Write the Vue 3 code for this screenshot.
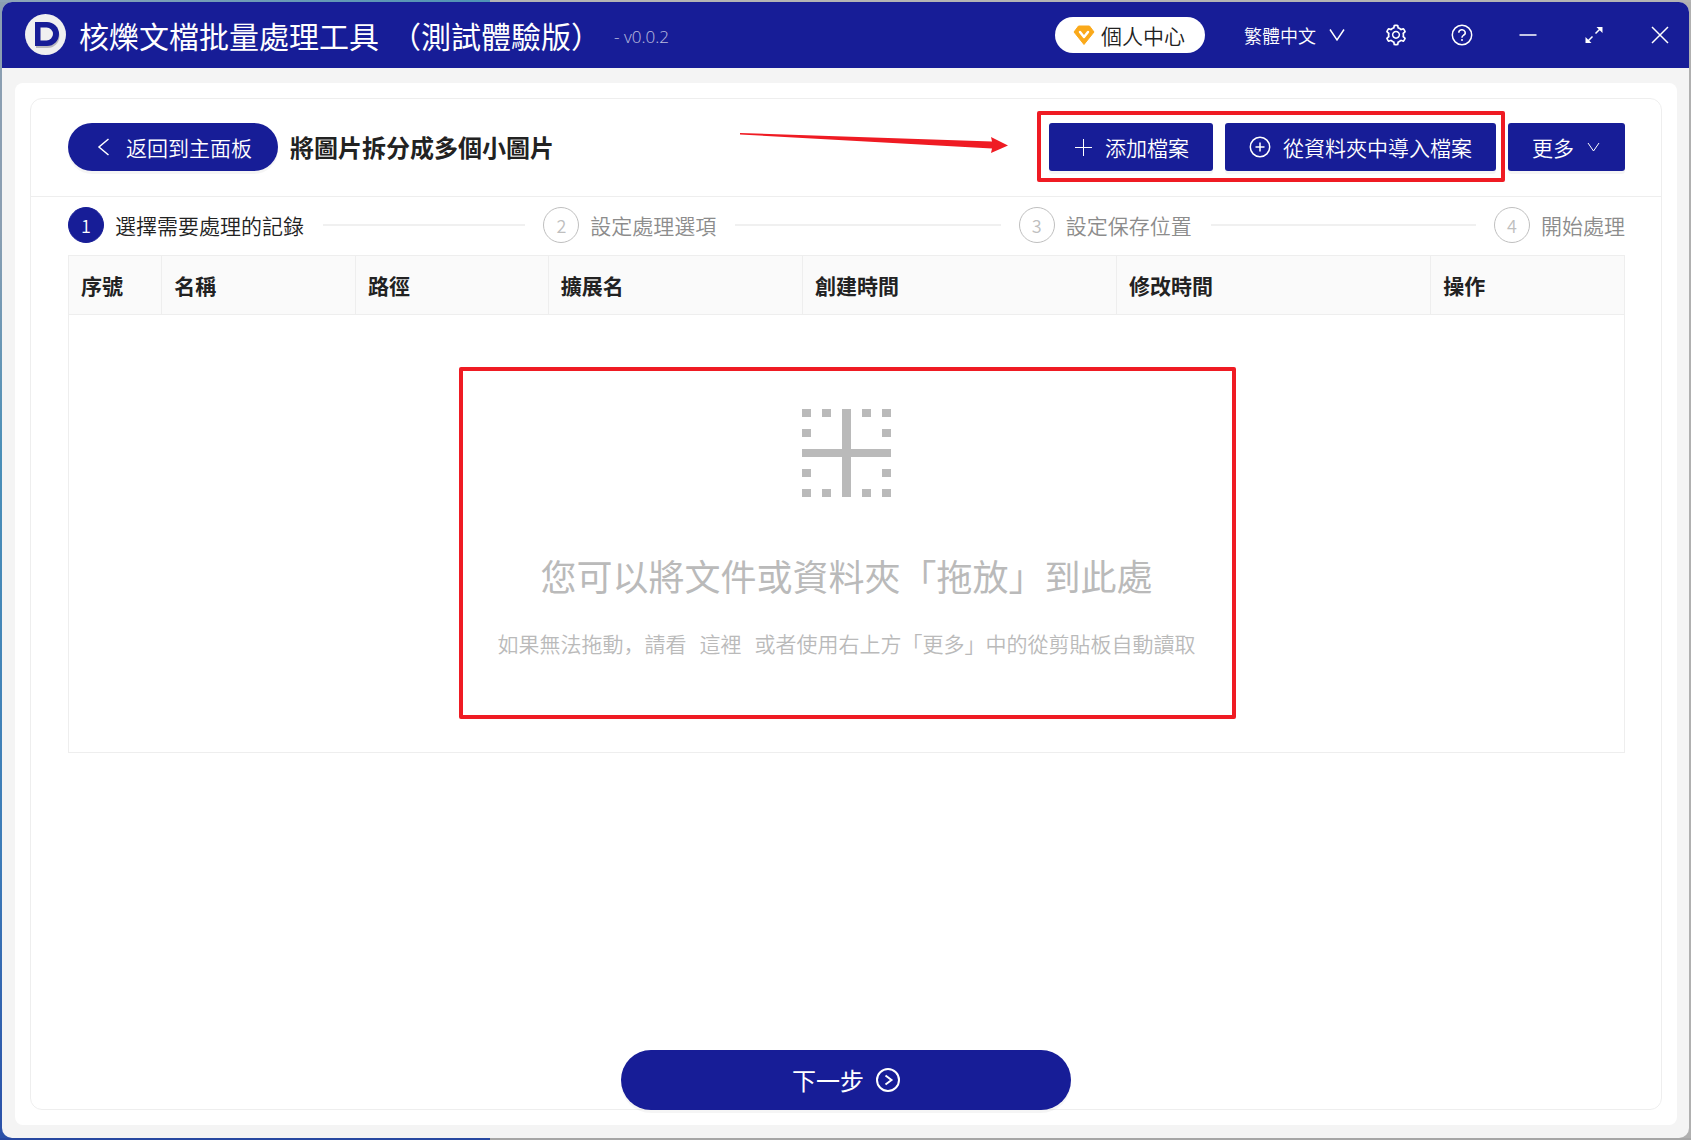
<script setup>
const steps = ['選擇需要處理的記錄', '設定處理選項', '設定保存位置', '開始處理']
const columns = [
  { label: '序號', width: 6 },
  { label: '名稱', width: 12.45 },
  { label: '路徑', width: 12.4 },
  { label: '擴展名', width: 16.35 },
  { label: '創建時間', width: 20.2 },
  { label: '修改時間', width: 20.2 },
  { label: '操作', width: 12.4 },
]
const dots = [
  [0, 0], [20, 0], [60, 0], [80, 0],
  [0, 20], [80, 20],
  [0, 60], [80, 60],
  [0, 80], [20, 80], [60, 80], [80, 80],
]
</script>

<template>
  <div class="desktop">
    <div class="window">
      <header class="titlebar">
        <svg class="logo" viewBox="0 0 41 41" aria-hidden="true">
          <circle cx="20.5" cy="20.5" r="20.5" fill="#f0f0f0" />
          <path d="M11 10h11.5a11.5 11.5 0 0 1 0 24H11z" fill="#b9b9bd" />
          <path d="M10 8h12a12 12 0 0 1 0 24H10z" fill="#171d97" />
          <path d="M15.5 13.5h6a6.500 6.500 0 0 1 0 13h-6z" fill="#f0f0f0" />
        </svg>
        <h1 class="app-name"><span>核爍文檔批量處理工具</span><span>（測試體驗版）</span></h1>
        <span class="version">- v0.0.2</span>

        <button class="account" type="button">
          <svg width="22" height="22" viewBox="0 0 22 22" aria-hidden="true">
            <path d="M5.500 2h11L21 8 11 20.500 1 8z" fill="#faa91a" stroke="#faa91a" stroke-linejoin="round" />
            <path d="M7 8l4 5 4-5" fill="none" stroke="#fff" stroke-width="2.500" stroke-linecap="round" stroke-linejoin="round" />
          </svg>
          個人中心
        </button>
        <label class="language">
          <select aria-label="繁體中文">
            <option>繁體中文</option>
          </select>
          <svg width="16" height="16" viewBox="0 0 16 16" aria-hidden="true">
            <path d="M1 2.500l7 10.500 7-10.500" class="line" />
          </svg>
        </label>
        <nav class="controls">
          <button type="button" aria-label="設定">
            <svg width="24" height="24" viewBox="0 0 1024 1024" fill="currentColor">
              <path d="M924.8 625.7l-65.5-56c3.1-19 4.7-38.4 4.7-57.8s-1.6-38.8-4.7-57.8l65.5-56a32.03 32.03 0 009.3-35.2l-.9-2.6a443.74 443.74 0 00-79.7-137.9l-1.8-2.1a32.12 32.12 0 00-35.1-9.5l-81.3 28.9c-30-24.6-63.5-44-99.7-57.6l-15.7-85a32.05 32.05 0 00-25.8-25.7l-2.7-.5c-52.1-9.4-106.9-9.4-159 0l-2.7.5a32.05 32.05 0 00-25.8 25.7l-15.8 85.4a351.86 351.86 0 00-99 57.4l-81.9-29.1a32 32 0 00-35.1 9.5l-1.8 2.1a446.02 446.02 0 00-79.7 137.9l-.9 2.6c-4.5 12.5-.8 26.5 9.3 35.2l66.3 56.6c-3.1 18.8-4.6 38-4.6 57.1 0 19.2 1.5 38.4 4.6 57.1L99 625.5a32.03 32.03 0 00-9.3 35.2l.9 2.6c18.1 50.4 44.9 96.9 79.7 137.9l1.8 2.1a32.12 32.12 0 0035.1 9.5l81.9-29.1c29.8 24.5 63.1 43.9 99 57.4l15.8 85.4a32.05 32.05 0 0025.8 25.7l2.7.5a449.4 449.4 0 00159 0l2.7-.5a32.05 32.05 0 0025.8-25.7l15.7-85a350 350 0 0099.7-57.6l81.3 28.9a32 32 0 0035.1-9.5l1.8-2.1c34.8-41.1 61.6-87.5 79.7-137.9l.9-2.6c4.5-12.3.8-26.3-9.3-35zM788.3 465.9c2.5 15.1 3.8 30.6 3.8 46.1s-1.3 31-3.8 46.1l-6.6 40.1 74.7 63.9a370.03 370.03 0 01-42.6 73.6L721 702.8l-31.4 25.8c-23.9 19.6-50.5 35-79.3 45.8l-38.1 14.3-17.9 97a377.5 377.5 0 01-85 0l-17.9-97.2-37.8-14.5c-28.5-10.8-55-26.2-78.7-45.7l-31.4-25.9-93.4 33.2c-17-22.9-31.2-47.6-42.6-73.6l75.5-64.5-6.5-40c-2.4-14.9-3.7-30.3-3.7-45.5 0-15.3 1.2-30.6 3.7-45.5l6.5-40-75.5-64.5c11.3-26.1 25.6-50.7 42.6-73.6l93.4 33.2 31.4-25.9c23.7-19.5 50.2-34.9 78.7-45.7l37.9-14.3 17.9-97.2c28.1-3.2 56.8-3.2 85 0l17.9 97 38.1 14.3c28.7 10.8 55.4 26.2 79.3 45.8l31.4 25.8 92.8-32.9c17 22.9 31.2 47.6 42.6 73.6L781.8 426l6.500 39.900zM512 326c-97.200 0-176 78.800-176 176s78.800 176 176 176 176-78.800 176-176-78.800-176-176-176zm79.200 255.200A111.600 111.600 0 01512 614c-29.900 0-58-11.700-79.200-32.800A111.600 111.600 0 01400 502c0-29.900 11.700-58 32.800-79.200C454 401.600 482.100 390 512 390c29.900 0 58 11.600 79.200 32.800A111.600 111.600 0 01624 502c0 29.900-11.700 58-32.800 79.200z" />
            </svg>
          </button>
          <button type="button" aria-label="說明">
            <svg width="24" height="24" viewBox="0 0 24 24">
              <circle cx="12" cy="12" r="9.700" class="line" />
              <path d="M8.800 9.800a3.200 2.900 0 1 1 4.600 2.500q-1.400.8-1.400 2.200v.3" class="line" />
              <circle cx="12" cy="17" r="1" fill="currentColor" />
            </svg>
          </button>
          <button type="button" aria-label="最小化">
            <svg width="24" height="24" viewBox="0 0 24 24"><path d="M3.500 12h17" class="line" /></svg>
          </button>
          <button type="button" aria-label="最大化">
            <svg width="24" height="24" viewBox="0 0 24 24">
              <path d="M5.500 18.500l5-5M13.500 10.500l5-5" class="line" />
              <path d="M14.500 4h6v6zM3.500 14v6h6z" fill="currentColor" />
            </svg>
          </button>
          <button type="button" aria-label="關閉">
            <svg width="24" height="24" viewBox="0 0 24 24"><path d="M4 4l16 16M20 4L4 20" class="line" /></svg>
          </button>
        </nav>
      </header>

      <main class="body">
        <div class="card">
          <section class="panel">
            <div class="toolbar">
              <button class="btn back" type="button">
                <svg width="14" height="20" viewBox="0 0 14 20" aria-hidden="true"><path d="M12.500 2L3 10l9.500 8" class="line" /></svg>
                返回到主面板
              </button>
              <h2 class="task">將圖片拆分成多個小圖片</h2>
              <div class="actions">
                <div class="imports">
                  <button class="btn" type="button">
                    <svg width="20" height="20" viewBox="0 0 20 20" aria-hidden="true"><path d="M10.500 2v17M2 10.500h17" class="hair" /></svg>
                    添加檔案
                  </button>
                  <button class="btn" type="button">
                    <svg width="22" height="22" viewBox="0 0 22 22" aria-hidden="true">
                      <circle cx="11" cy="11" r="9.700" class="line" />
                      <path d="M11 6.500v9M6.500 11h9" class="line" />
                    </svg>
                    從資料夾中導入檔案
                  </button>
                  <span class="mark"></span>
                  <svg class="arrow" width="268" height="20" viewBox="0 0 268 20" aria-hidden="true">
                    <path d="M0 0L252 8.500 251 4 268 12.500 251 20 252 15.500 0 1.500z" fill="#ef1b23" />
                  </svg>
                </div>
                <button class="btn" type="button">
                  更多
                  <svg width="15" height="14" viewBox="0 0 15 14" aria-hidden="true"><path d="M2 3l5.500 8L13 3" class="hair" /></svg>
                </button>
              </div>
            </div>

            <ol class="steps">
              <li v-for="(step, i) in steps" :key="step" :class="{ active: i === 0 }">
                <span class="num">{{ i + 1 }}</span>
                <span>{{ step }}</span>
              </li>
            </ol>

            <table class="files">
              <colgroup>
                <col v-for="c in columns" :key="c.label" :style="{ width: c.width + '%' }" />
              </colgroup>
              <thead>
                <tr>
                  <th v-for="c in columns" :key="c.label" scope="col">{{ c.label }}</th>
                </tr>
              </thead>
              <tbody>
                <tr>
                  <td :colspan="columns.length">
                    <div class="drop">
                      <svg width="89" height="88" viewBox="0 0 89 88" fill="#bababa" aria-hidden="true">
                        <path d="M40 0h9v88h-9zM0 40h89v8H0z" />
                        <rect v-for="d in dots" :key="d.join()" :x="d[0]" :y="d[1]" width="9" height="8" />
                      </svg>
                      <p class="headline">您可以將文件或資料夾「拖放」到此處</p>
                      <p class="hint">
                        <span>如果無法拖動，請看</span>
                        <a href="#">這裡</a>
                        <span>或者使用右上方「更多」中的從剪貼板自動讀取</span>
                      </p>
                      <span class="mark"></span>
                    </div>
                  </td>
                </tr>
              </tbody>
            </table>

            <button class="btn next" type="button">
              下一步
              <svg width="24" height="24" viewBox="0 0 24 24" aria-hidden="true">
                <circle cx="12" cy="12" r="11" fill="none" stroke="currentColor" stroke-width="2" />
                <path d="M9.500 7.500l6 4.500-6 4.500" fill="none" stroke="currentColor" stroke-width="2" />
              </svg>
            </button>
          </section>
        </div>
      </main>
    </div>
  </div>
</template>

<style>
body {
  margin: 0;
}
</style>

<style scoped>
.desktop {
  box-sizing: border-box;
  display: flex;
  min-height: 100vh;
  padding: 2px;
  background:
    linear-gradient(90deg, #8fa5b8, #4f93b5 490px, #b4b4b4 490px) top / 100% 2px no-repeat,
    linear-gradient(90deg, #2748a0 490px, #a6a6a6 490px) bottom / 100% 2px no-repeat,
    linear-gradient(#8b9fb2 20%, #4a8fb8 40%, #3d7cb8 75%, #2a50a8) left / 50% 100% no-repeat,
    #b0b0b0;
  font-family: "Noto Sans CJK SC", "Noto Sans CJK TC", sans-serif;
  font-size: 21px;
  font-weight: 350;
  line-height: 30px;
  color: #222;
}
.window {
  flex: 1;
  display: flex;
  flex-direction: column;
  min-width: 0;
  border-radius: 10px;
  overflow: hidden;
  background: #f4f4f4;
}
button,
select {
  margin: 0;
  padding: 0;
  border: 0;
  background: none;
  color: inherit;
  font: inherit;
  white-space: nowrap;
}
svg {
  flex: none;
  display: block;
}
.line,
.hair {
  fill: none;
  stroke: currentColor;
  stroke-width: 1.5px;
}
.hair {
  stroke-width: 1px;
}
.titlebar {
  display: flex;
  align-items: center;
  height: 66px;
  padding: 0 17px 0 23px;
  background: #171d97;
  color: #fff;
}
.logo {
  width: 41px;
  height: 41px;
  margin-bottom: 2px;
}
.app-name {
  display: flex;
  gap: 12px;
  margin: 0 0 0 13px;
  font-size: 30px;
  font-weight: 400;
  line-height: 44px;
  white-space: nowrap;
}
.version {
  margin: 4px 0 0 13px;
  font-family: "Open Sans", sans-serif;
  font-size: 17px;
  opacity: 0.7;
}
.account {
  display: flex;
  align-items: center;
  gap: 6px;
  height: 36px;
  margin-left: auto;
  padding: 0 20px 0 18px;
  border-radius: 18px;
  background: #fff;
  color: #222;
  line-height: 28px;
}
.language {
  display: flex;
  align-items: center;
  gap: 12px;
  margin: 0 39px;
}
.language select {
  appearance: none;
  width: 73px;
  font-size: 18px;
}
.language option {
  color: #222;
}
.controls {
  display: flex;
  gap: 42px;
}
.body {
  flex: 1;
  display: flex;
  padding: 15px 12px 13px 13px;
}
.card {
  flex: 1;
  display: flex;
  min-width: 0;
  padding: 15px;
  border-radius: 8px;
  background: #fff;
}
.panel {
  flex: 1;
  display: flex;
  flex-direction: column;
  min-width: 0;
  border: 1px solid #eee;
  border-radius: 12px;
}
.toolbar {
  display: flex;
  align-items: center;
  padding: 24px 36px 25px 37px;
  border-bottom: 1px solid #eee;
}
.btn {
  display: flex;
  align-items: center;
  justify-content: center;
  gap: 12px;
  height: 48px;
  padding: 0 24px;
  border-radius: 3px;
  background: #171d97;
  box-shadow: 0 3px 0 rgba(0, 0, 0, 0.04);
  color: #fff;
}
.back {
  gap: 16px;
  padding: 0 26px 0 28px;
  border-radius: 24px;
}
.task {
  margin: 0 0 0 12px;
  font-size: 24px;
  font-weight: 700;
}
.actions,
.imports {
  display: flex;
  gap: 12px;
}
.actions {
  margin-left: auto;
}
.imports {
  position: relative;
}
.mark {
  position: absolute;
  inset: -12px -9px -11px -12px;
  border: 4px solid #ef1b23;
  border-radius: 2px;
  pointer-events: none;
}
.arrow {
  position: absolute;
  top: 10px;
  right: calc(100% + 41px);
}
.steps {
  display: flex;
  gap: 18px;
  margin: 0;
  padding: 10px 36px 12px 37px;
  list-style: none;
  color: #8c8c8c;
}
.steps li {
  flex: 1;
  display: flex;
  align-items: center;
  gap: 11px;
  white-space: nowrap;
}
.steps li:last-child {
  flex: none;
}
.steps li:not(:last-child)::after {
  content: "";
  flex: 1;
  height: 2px;
  margin-left: 8px;
  background: #f0f0f0;
}
.steps .active {
  color: #222;
}
.num {
  box-sizing: border-box;
  width: 36px;
  height: 36px;
  border: 1px solid #bfbfbf;
  border-radius: 50%;
  color: #bfbfbf;
  font-size: 18px;
  line-height: 34px;
  text-align: center;
}
.active .num {
  border-color: #171d97;
  background: #171d97;
  color: #fff;
}
.files {
  box-sizing: border-box;
  width: calc(100% - 73px);
  margin: 0 36px 0 37px;
  border: 1px solid #eee;
  border-spacing: 0;
  table-layout: fixed;
}
.files th {
  height: 58px;
  padding: 0 12px;
  border-right: 1px solid #eee;
  border-bottom: 1px solid #eee;
  background: #fafafa;
  font-weight: 700;
  text-align: left;
}
.files th:last-child {
  border-right: 0;
}
.files td {
  padding: 52px 0 33px;
}
.drop {
  position: relative;
  display: flex;
  flex-direction: column;
  align-items: center;
  box-sizing: border-box;
  width: 776px;
  max-width: 100%;
  height: 352px;
  margin: 0 auto;
  padding-top: 42px;
  color: #bababa;
}
.drop .mark {
  inset: 0 -1px 0 0;
}
.headline {
  margin: 51px 0 0;
  font-size: 36px;
  font-weight: 400;
  line-height: 54px;
}
.hint {
  display: flex;
  gap: 13px;
  margin: 26px 0 0;
}
.hint a {
  color: inherit;
  text-decoration: none;
}
.next {
  width: 450px;
  height: 60px;
  margin: auto auto -1px;
  border-radius: 30px;
  font-size: 24px;
  font-weight: 400;
}
</style>
